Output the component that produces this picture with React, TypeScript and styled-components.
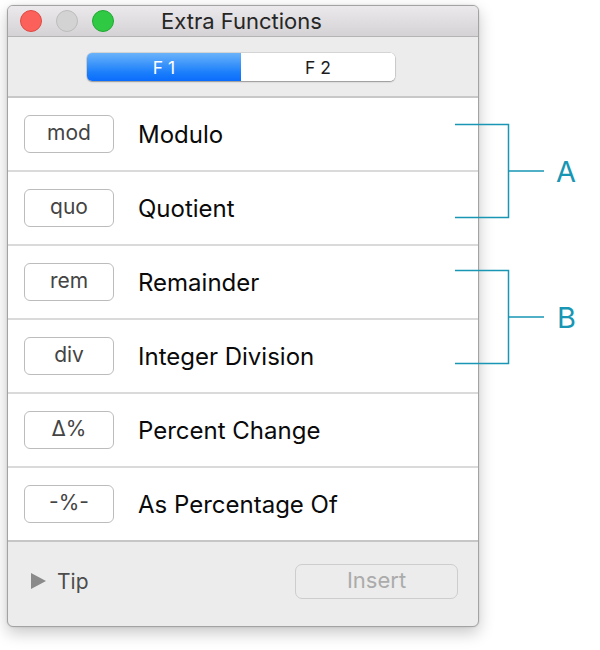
import React from "react";
import styled, { createGlobalStyle } from "styled-components";

const GlobalStyle = createGlobalStyle`
  html, body { margin: 0; padding: 0; background: #ffffff; }
  body { font-family: Inter, "Liberation Sans", Arial, sans-serif; -webkit-font-smoothing: antialiased; }
  * { box-sizing: border-box; }
`;

const Page = styled.div`
  position: relative;
  width: 600px;
  height: 650px;
  padding: 5px 0 0 7px;
`;

const Window = styled.div`
  width: 472px;
  display: flex;
  flex-direction: column;
  border: 1px solid #a3a3a3;
  border-radius: 6px;
  overflow: hidden;
  background: #ececec;
  box-shadow: 0 6px 16px rgba(0, 0, 0, 0.22), 0 0 2px rgba(0, 0, 0, 0.15);
`;

const TitleBar = styled.div`
  height: 31px;
  display: grid;
  grid-template-columns: 1fr auto 1fr;
  align-items: center;
  background: linear-gradient(#ebe9eb, #d4d2d4);
  border-bottom: 1px solid #b4b4b4;
`;

const Lights = styled.div`
  display: flex;
  gap: 14px;
  padding-left: 12px;
`;

const Light = styled.span<{ $fill: string; $edge: string }>`
  width: 22px;
  height: 22px;
  border-radius: 50%;
  background: ${(p) => p.$fill};
  border: 1px solid ${(p) => p.$edge};
`;

const Title = styled.div`
  font-size: 22px;
  color: #262626;
  padding-right: 3px;
`;

const Toolbar = styled.div`
  height: 61px;
  display: flex;
  justify-content: center;
  padding: 16px 4px 0 0;
  border-bottom: 2px solid #c8c8c8;
`;

const Segmented = styled.div`
  width: 308px;
  height: 28px;
  display: flex;
  border-radius: 5px;
  overflow: hidden;
  background: #fff;
  box-shadow: 0 0 0 0.5px rgba(0, 0, 0, 0.18), 0 1px 1.5px rgba(0, 0, 0, 0.3);
`;

const Segment = styled.div<{ $active?: boolean }>`
  flex: 1;
  display: flex;
  align-items: center;
  justify-content: center;
  font-size: 17.5px;
  color: ${(p) => (p.$active ? "#ffffff" : "#1d1d1d")};
  background: ${(p) => (p.$active ? "linear-gradient(#6bb3fa, #1a7efb 70%, #0a6cfc)" : "#ffffff")};
`;

const List = styled.div`
  display: flex;
  flex-direction: column;
  background: #ffffff;
  border-bottom: 2px solid #c6c6c6;
`;

const Row = styled.div`
  height: 74px;
  display: flex;
  align-items: center;
  gap: 24px;
  padding-left: 16px;
  border-bottom: 2px solid #dadada;
  &:last-child { border-bottom: none; height: 72px; }
`;

const KeyBox = styled.div`
  width: 90px;
  height: 38px;
  display: flex;
  align-items: center;
  justify-content: center;
  border: 1px solid #bcbcbc;
  border-radius: 6px;
  font-size: 21px;
  color: #444444;
  padding-bottom: 3px;
`;

const Label = styled.div`
  font-size: 24px;
  color: #0a0a0a;
`;

const Footer = styled.div`
  height: 84px;
  display: flex;
  align-items: center;
  justify-content: space-between;
  padding: 0 20px 6px 23px;
`;

const Disclosure = styled.div`
  display: flex;
  align-items: center;
  gap: 11px;
  font-size: 21px;
  color: #4c4c4c;
`;

const Triangle = styled.span`
  width: 0;
  height: 0;
  border-top: 8px solid transparent;
  border-bottom: 8px solid transparent;
  border-left: 15px solid #8a8a8a;
`;

const InsertButton = styled.button`
  width: 163px;
  height: 35px;
  border: 1.5px solid #cdcdcd;
  border-radius: 7px;
  background: transparent;
  font-family: inherit;
  font-size: 22px;
  color: #ababab;
  padding: 0 0 2px;
`;

const Annotations = styled.svg`
  position: absolute;
  left: 0;
  top: 0;
  pointer-events: none;
  overflow: visible;
`;

const rows = [
  { key: "mod", label: "Modulo" },
  { key: "quo", label: "Quotient" },
  { key: "rem", label: "Remainder" },
  { key: "div", label: "Integer Division" },
  { key: "Δ%", label: "Percent Change" },
  { key: "-%-", label: "As Percentage Of" },
];

const ANNO = "#1896b3";

export default function App() {
  return (
    <Page>
      <GlobalStyle />
      <Window>
        <TitleBar>
          <Lights>
            <Light $fill="#fc605b" $edge="#de4842" />
            <Light $fill="#d3d3d3" $edge="#bcbcbc" />
            <Light $fill="#2fc944" $edge="#22a834" />
          </Lights>
          <Title>Extra Functions</Title>
          <span />
        </TitleBar>
        <Toolbar>
          <Segmented>
            <Segment $active>F 1</Segment>
            <Segment>F 2</Segment>
          </Segmented>
        </Toolbar>
        <List>
          {rows.map((r) => (
            <Row key={r.key}>
              <KeyBox>{r.key}</KeyBox>
              <Label>{r.label}</Label>
            </Row>
          ))}
        </List>
        <Footer>
          <Disclosure>
            <Triangle />
            Tip
          </Disclosure>
          <InsertButton disabled>Insert</InsertButton>
        </Footer>
      </Window>
      <Annotations width="600" height="650" viewBox="0 0 600 650">
        <g stroke={ANNO} strokeWidth="1.5" fill="none">
          <path d="M455 124.5 H508.5 V217.5 H455 M508.5 171 H544" />
          <path d="M455 270.5 H508.5 V363.5 H455 M508.5 317 H544" />
        </g>
        <g fill={ANNO} fontFamily="Inter, 'Liberation Sans', sans-serif" fontSize="29">
          <text x="556" y="182">A</text>
          <text x="557" y="328">B</text>
        </g>
      </Annotations>
    </Page>
  );
}
